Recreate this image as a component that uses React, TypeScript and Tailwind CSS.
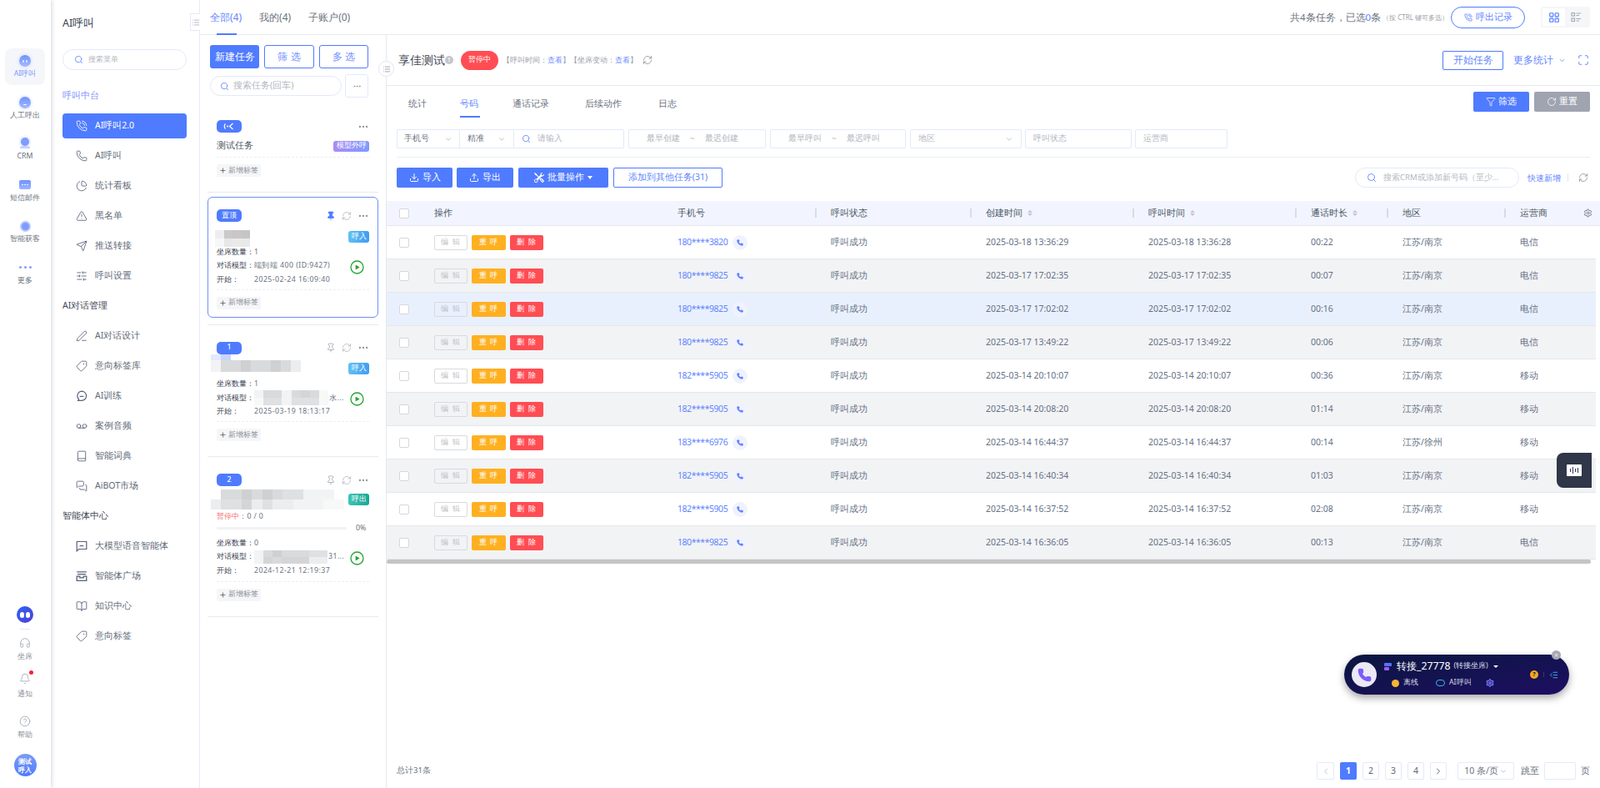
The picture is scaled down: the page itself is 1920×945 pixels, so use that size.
import React from 'react';
import {
  Search, PhoneCall, Phone, ChartPie, TriangleAlert, Send, SlidersHorizontal, PenLine, Tag,
  Voicemail, Book, MessagesSquare, BookOpen, Headphones, Bell, CircleHelp, Ellipsis, Plus,
  Pin, RefreshCw, ChevronDown, ChevronLeft, ChevronRight, Funnel, Download, Upload, Settings,
  Maximize, LayoutGrid, ListIndentDecrease, List, RotateCw,
} from 'lucide-react';
import { BsTools } from 'react-icons/bs';

const TagTurned = (p: any) => <Tag {...p} className={`${p.className} rotate-90`} />;
const ChatDash = ({ size, className }: any) => (
  <svg width={size} height={size} viewBox="0 0 14 14" fill="none" stroke="currentColor" strokeWidth="1.2" className={className}>
    <path d="M7 1.2a5.6 5.6 0 0 1 0 11.2H2.6l1-1.6A5.6 5.6 0 0 1 7 1.2z" /><path d="M4.6 7.4h4.8" />
  </svg>
);
const BoxSmile = ({ size, className }: any) => (
  <svg width={size} height={size} viewBox="0 0 14 14" fill="none" stroke="currentColor" strokeWidth="1.2" className={className}>
    <path d="M1.2 1.5h11.6v9H3.6L1.2 12.8z" /><path d="M4.6 6.6h4.8" />
  </svg>
);
const Tray = ({ size, className }: any) => (
  <svg width={size} height={size} viewBox="0 0 14 14" fill="none" stroke="currentColor" strokeWidth="1.3" className={className}>
    <path d="M1.2 1.8h11.6M2 4.6h10M1.2 7.2h3.6v1.6h4.4V7.2h3.6v5.2H1.2z" />
  </svg>
);

const Gradient = ({ children }: { children?: React.ReactNode }) => (
  <div className="w-[14px] h-[14px] rounded-full bg-gradient-to-b from-[#6f92ff] to-[#a4b9ff] shadow-[0_0_4px_#c7d4ff] flex items-center justify-center gap-[2px]">{children}</div>
);

function RailItem({ label, active, icon }: { label: string; active?: boolean; icon: React.ReactNode }) {
  return (
    <div className={`w-[48px] h-[44px] rounded-lg flex flex-col items-center pt-[8px] ${active ? 'bg-[#f5f6fa]' : ''}`}>
      <div className="h-[14px] flex items-center justify-center">{icon}</div>
      <div className={`mt-[2px] text-[8.75px] leading-[13px] whitespace-nowrap ${active ? 'text-[#7c96ff]' : 'text-[#6b7280]'}`}>{label}</div>
    </div>
  );
}

function Rail() {
  return (
    <aside className="w-[61px] shrink-0 h-full flex flex-col items-center bg-white shadow-[1px_0_5px_rgba(60,70,110,0.22)] z-10 pt-[58px] pb-[14px] pr-px">
      <div className="flex flex-col gap-[5.5px]">
        <RailItem active label="AI呼叫" icon={<Gradient><i className="w-[2px] h-[3px] bg-white rounded-full opacity-70" /><i className="w-[2px] h-[3px] bg-white rounded-full opacity-70" /></Gradient>} />
        <RailItem label="人工呼出" icon={<Gradient><i className="w-[4px] h-[2px] mt-[4px] border-b border-white rounded-full" /></Gradient>} />
        <RailItem label="CRM" icon={<div className="w-[14px] h-[14px] flex flex-col items-center"><i className="w-[10px] h-[10px] rounded-full bg-[#7f9cff] shadow-[0_0_4px_#b9c9ff]" /><i className="w-[12px] h-[3px] bg-[#c4d1ff] rounded-t-full" /></div>} />
        <RailItem label="短信邮件" icon={<div className="w-[14px] h-[11px] rounded-[2px] bg-gradient-to-b from-[#6f92ff] to-[#9db3ff] flex items-center justify-center gap-[1.5px]"><i className="w-[1.5px] h-[1.5px] bg-white rounded-full" /><i className="w-[1.5px] h-[1.5px] bg-white rounded-full" /><i className="w-[1.5px] h-[1.5px] bg-white rounded-full" /></div>} />
        <RailItem label="智能获客" icon={<div className="w-[13px] h-[13px] rounded-full border-[2px] border-[#b7c7ff] bg-[#7f9cff]" />} />
        <RailItem label="更多" icon={<div className="flex gap-[3px]"><i className="w-[3px] h-[3px] rounded-full bg-[#7f9cff]" /><i className="w-[3px] h-[3px] rounded-full bg-[#7f9cff]" /><i className="w-[3px] h-[3px] rounded-full bg-[#7f9cff]" /></div>} />
      </div>
      <div className="mt-auto flex flex-col items-center">
        <div className="w-[20px] h-[20px] rounded-full bg-gradient-to-br from-[#2a62f5] to-[#4a3fd8] flex items-center justify-center gap-[2px]">
          <i className="w-[5px] h-[7px] rounded-full bg-white" /><i className="w-[5px] h-[7px] rounded-full bg-white" />
        </div>
        <div className="w-[12px] h-px bg-[#e4e7f7] mt-[7px]" />
        <Headphones size={14} strokeWidth={1.4} className="text-[#9ca3af] mt-[9px]" />
        <div className="text-[8.75px] leading-[13px] text-[#8a919e] mt-[3px]">坐席</div>
        <div className="relative mt-[13px]">
          <Bell size={14} strokeWidth={1.4} className="text-[#9ca3af]" />
          <i className="absolute -top-[3px] -right-[3px] w-[5px] h-[5px] rounded-full bg-[#f5222d]" />
        </div>
        <div className="text-[8.75px] leading-[13px] text-[#8a919e] mt-[5px]">通知</div>
        <CircleHelp size={14} strokeWidth={1.4} className="text-[#9ca3af] mt-[19px]" />
        <div className="text-[8.75px] leading-[13px] text-[#8a919e] mt-[3px]">帮助</div>
        <div className="w-[27px] h-[27px] mt-[16px] rounded-full bg-gradient-to-b from-[#7d9bf7] to-[#4f7bff] text-white text-[7.5px] leading-[10px] font-bold flex flex-col items-center justify-center">
          <span>测试</span><span>呼入</span>
        </div>
      </div>
    </aside>
  );
}

const MenuHeading = ({ children, blue }: { children: React.ReactNode; blue?: boolean }) => (
  <div className={`h-[36px] flex items-center text-[10.5px] ${blue ? 'text-[#7c94ff]' : 'text-[#3f4653]'}`}>{children}</div>
);

function MenuItem({ icon: Icon, label, active }: { icon: any; label: string; active?: boolean }) {
  return (
    <div className="h-[36px] flex items-center">
      <div className={`w-full h-[30px] rounded-[4px] flex items-center pl-[16px] gap-[9px] text-[10.5px] ${active ? 'bg-[#4f7bff] text-white' : 'text-[#636b79]'}`}>
        <Icon size={14} strokeWidth={1.5} className={active ? 'text-white' : 'text-[#59627a]'} />
        <span>{label}</span>
      </div>
    </div>
  );
}

function Menu() {
  return (
    <aside className="w-[179px] shrink-0 h-full bg-white border-r border-[#e6e9fb] pl-[14px] pr-[15px] relative">
      <div className="absolute right-[-1px] top-[16px] w-[12px] h-[21px] bg-white border border-[#e6e9fb] border-r-0 flex items-center justify-center">
        <List size={10} className="text-[#a9adba]" />
      </div>
      <div className="h-[59px] pt-[19px] text-[12.5px] leading-[18px] text-[#374151]">AI呼叫</div>
      <div className="h-[25px] rounded-full border border-[#e4e9fd] flex items-center pl-[13px] gap-[6px] text-[8.75px] text-[#b4b7bf]">
        <Search size={11} className="text-[#6d8dff]" />
        <span>搜索菜单</span>
      </div>
      <div className="mt-[13px]">
        <MenuHeading blue>呼叫中台</MenuHeading>
        <MenuItem active icon={PhoneCall} label="AI呼叫2.0" />
        <MenuItem icon={Phone} label="AI呼叫" />
        <MenuItem icon={ChartPie} label="统计看板" />
        <MenuItem icon={TriangleAlert} label="黑名单" />
        <MenuItem icon={Send} label="推送转接" />
        <MenuItem icon={SlidersHorizontal} label="呼叫设置" />
        <MenuHeading>AI对话管理</MenuHeading>
        <MenuItem icon={PenLine} label="AI对话设计" />
        <MenuItem icon={TagTurned} label="意向标签库" />
        <MenuItem icon={ChatDash} label="AI训练" />
        <MenuItem icon={Voicemail} label="案例音频" />
        <MenuItem icon={Book} label="智能词典" />
        <MenuItem icon={MessagesSquare} label="AiBOT市场" />
        <MenuHeading>智能体中心</MenuHeading>
        <MenuItem icon={BoxSmile} label="大模型语音智能体" />
        <MenuItem icon={Tray} label="智能体广场" />
        <MenuItem icon={BookOpen} label="知识中心" />
        <MenuItem icon={TagTurned} label="意向标签" />
      </div>
    </aside>
  );
}

function Mosaic({ rows, className = '' }: { rows: string[][]; className?: string }) {
  return (
    <div className={`flex flex-col blur-[0.6px] ${className}`}>
      {rows.map((r, i) => (
        <div key={i} className="flex flex-1">
          {r.map((c, j) => <div key={j} className="flex-1" style={{ backgroundColor: c }} />)}
        </div>
      ))}
    </div>
  );
}

const AddTag = () => (
  <div className="w-[53px] h-[15px] rounded-[2px] bg-[#f5f6f8] flex items-center justify-center gap-[2px] text-[8.75px] text-[#8c9099]">
    <Plus size={9} className="text-[#555]" /><span>新增标签</span>
  </div>
);

const Dashed = () => <div className="border-t border-dashed border-[#eceef2]" />;

const TopIcons = ({ pinned, only }: { pinned?: boolean; only?: boolean }) => (
  <div className="flex items-center gap-[7px]">
    {!only && <Pin size={12} strokeWidth={1.5} className={pinned ? 'text-[#4f7bff] fill-[#4f7bff]' : 'text-[#9aa0ab]'} />}
    {!only && <RefreshCw size={12} strokeWidth={1.2} className="text-[#9aa0ab]" />}
    <Ellipsis size={14} className="text-[#8d929c]" />
  </div>
);

const CardBadge = ({ children }: { children: React.ReactNode }) => (
  <div className="w-[30px] h-[15px] rounded-[5px] bg-[#4f7bff] text-white text-[8.75px] font-medium flex items-center justify-center">{children}</div>
);

const Kind = ({ children, className }: { children: React.ReactNode; className: string }) => (
  <div className={`w-[25px] h-[14px] rounded-[3px] text-white text-[8.75px] flex items-center justify-center ${className}`}>{children}</div>
);

const PlayIcon = () => (
  <svg width="17" height="17" viewBox="0 0 17 17" className="mr-[6px] mt-[3px] shrink-0">
    <circle cx="8.5" cy="8.5" r="7.5" fill="none" stroke="#22a52e" strokeWidth="1.3" />
    <path d="M6.6 5.4 L11.6 8.5 L6.6 11.6 Z" fill="#22a52e" />
  </svg>
);

function Info({ rows }: { rows: [string, React.ReactNode][] }) {
  return (
    <div className="flex items-center">
      <div className="flex-1 min-w-0">
        {rows.map(([k, v], i) => (
          <div key={i} className="h-[16.5px] flex items-center text-[8.75px] whitespace-nowrap">
            <span className="w-[45px] shrink-0 font-medium text-[#374151]">{k}</span>
            <span className="text-[#6b7280] tracking-[0.45px] flex items-center">{v}</span>
          </div>
        ))}
      </div>
      <PlayIcon />
    </div>
  );
}

const Card = ({ selected, children }: { selected?: boolean; children: React.ReactNode }) => (
  <div className="pt-[5px] pb-[8px] border-b border-[#e8eaee]">
    <div className={`rounded-[6px] border px-[10px] pt-[14px] pb-[9px] ${selected ? 'border-[#6d8ff5]' : 'border-transparent'}`}>{children}</div>
  </div>
);

const g = ['#e9ebee', '#d9dadc', '#cfd0d2', '#d6d5d5', '#dfe0e2', '#ecedef', '#f2f3f4', '#f7f8f8'];

function TaskList() {
  return (
    <section className="w-[224px] shrink-0 h-full border-r border-[#e6e8ee] bg-white">
      <div className="px-[12px] pt-[12px]">
        <div className="flex gap-[6px]">
          <div className="w-[59px] h-[28px] rounded-[3px] bg-[#4f7bff] text-white text-[11.75px] flex items-center justify-center">新建任务</div>
          <div className="w-[60px] h-[28px] rounded-[3px] border border-[#4f7bff] text-[#6b8cff] text-[11.75px] flex items-center justify-center">筛 选</div>
          <div className="w-[59px] h-[28px] rounded-[3px] border border-[#4f7bff] text-[#6b8cff] text-[11.75px] flex items-center justify-center">多 选</div>
        </div>
        <div className="flex items-center gap-[4px] mt-[7px] h-[28px]">
          <div className="w-[158px] h-[24px] rounded-full border border-[#e4e9fd] flex items-center pl-[11px] gap-[5px] text-[10.5px] text-[#b4b7bf]">
            <Search size={11} className="text-[#6d8dff]" /><span>搜索任务(回车)</span>
          </div>
          <div className="w-[28px] h-[28px] rounded-[3px] border border-[#e4e9fd] flex items-center justify-center"><Ellipsis size={11} className="text-[#8d929c]" /></div>
        </div>
      </div>
      <div className="px-[9px] mt-[7px]">
        <Card>
          <div className="flex items-center justify-between h-[15px]">
            <CardBadge>
              <svg width="14" height="9" viewBox="0 0 14 9" fill="none" stroke="#fff" strokeWidth="1.2">
                <path d="M2.5 1.5 C0.8 3.5 0.8 5.5 2.5 7.5" /><circle cx="5" cy="4.5" r="1" fill="#fff" stroke="none" />
                <path d="M11.5 1 L7.5 4.5 L11.5 8" />
              </svg>
            </CardBadge>
            <TopIcons only />
          </div>
          <div className="flex items-center justify-between mt-[8px] h-[16px]">
            <span className="text-[10.5px] text-[#4b5563]">测试任务</span>
            <div className="w-[43px] h-[13px] rounded-[3px] bg-gradient-to-r from-[#a98bf5] to-[#7d9bff] text-white text-[8.75px] flex items-center justify-center">模型外呼</div>
          </div>
          <div className="mt-[5px]"><Dashed /></div>
          <div className="mt-[8px]"><AddTag /></div>
        </Card>
        <Card selected>
          <div className="flex items-center justify-between h-[15px]"><CardBadge>置顶</CardBadge><TopIcons pinned /></div>
          <div className="flex items-start justify-between h-[28px]">
            <Mosaic className="w-[53px] h-[20px] mt-[10px] -ml-[2px]" rows={[['#eceef0', '#c9c9ca', '#c9c6c5', '#c5c5c6', '#fff'], ['#f6f7f8', '#e7e7e8', '#eaeaea', '#e9e9ea', '#fff']]} />
            <Kind className="mt-[11px] bg-gradient-to-r from-[#62c0f0] to-[#3f9cf5]">呼入</Kind>
          </div>
          <Info rows={[['坐席数量：', '1'], ['对话模型：', '端到端 400 (ID:9427)'], ['开始：', '2025-02-24 16:09:40']]} />
          <div className="mt-[3px]"><Dashed /></div>
          <div className="mt-[8px]"><AddTag /></div>
        </Card>
        <Card>
          <div className="flex items-center justify-between h-[15px]"><CardBadge>1</CardBadge><TopIcons /></div>
          <div className="flex items-start justify-between h-[28px]">
            <Mosaic className="w-[108px] h-[21px] -ml-[7px]" rows={[['#e3eafd', '#c7d4fb', '#fff', '#fff', '#fff', '#fff', '#fff', '#fff', '#fff'], [g[6], g[1], g[1], g[2], g[1], g[1], g[2], g[1], g[5]], [g[6], g[1], g[1], g[2], g[1], g[1], g[2], g[1], g[5]]]} />
            <Kind className="mt-[10px] bg-gradient-to-r from-[#62c0f0] to-[#3f9cf5]">呼入</Kind>
          </div>
          <Info rows={[['坐席数量：', '1'], ['对话模型：', <><Mosaic className="w-[89px] h-[18px]" rows={[[g[6], g[1], g[1], g[6], g[1], g[3], g[1], g[7]], [g[7], g[4], g[4], g[6], g[4], g[4], g[4], g[7]]]} /><span className="ml-[1px]">水...</span></>], ['开始：', '2025-03-19 18:13:17']]} />
          <div className="mt-[3px]"><Dashed /></div>
          <div className="mt-[8px]"><AddTag /></div>
        </Card>
        <Card>
          <div className="flex items-center justify-between h-[15px]"><CardBadge>2</CardBadge><TopIcons /></div>
          <div className="flex items-start justify-between h-[29px]">
            <Mosaic className="w-[160px] h-[24px] mt-[4px] -ml-[7px]" rows={[['#fff', g[1], g[1], g[2], g[1], g[2], g[1], g[4], g[4], g[6], g[6], g[6], '#fff'], [g[5], g[4], g[4], g[3], g[5], g[4], g[5], g[5], g[6], g[6], g[6], g[7], g[7]]]} />
            <Kind className="mt-[9px] bg-gradient-to-r from-[#3cc4b4] to-[#16a894]">呼出</Kind>
          </div>
          <div className="flex items-center h-[16px] text-[8.75px]"><span className="text-[#f56c6c]">暂停中</span><span className="text-[#6b7280] tracking-[0.4px]">：0 / 0</span></div>
          <div className="flex items-center h-[11px]">
            <div className="w-[156px] h-[3px] rounded-full bg-[#f1f2f4]" />
            <span className="ml-[11px] text-[8.75px] text-[#6b7280]">0%</span>
          </div>
          <div className="mt-[4px]">
            <Info rows={[['坐席数量：', '0'], ['对话模型：', <><Mosaic className="w-[88px] h-[16px]" rows={[[g[6], g[1], g[2], g[1], g[1], g[1], g[4], g[4]], [g[6], g[3], g[1], g[3], g[3], g[3], g[5], g[5]]]} /><span className="ml-[1px]">31...</span></>], ['开始：', '2024-12-21 12:19:37']]} />
          </div>
          <div className="mt-[4px]"><Dashed /></div>
          <div className="mt-[8px]"><AddTag /></div>
        </Card>
      </div>
    </section>
  );
}

const Field = ({ w, children, cls = '' }: { w: string; children?: React.ReactNode; cls?: string }) => (
  <div className={`${w} h-[23px] shrink-0 border border-[#e4e9fb] flex items-center text-[9.6px] ${cls}`}>{children}</div>
);

const Blue = ({ w, icon: Icon, children }: { w: string; icon: any; children: React.ReactNode }) => (
  <div className={`${w} h-[24px] rounded-[2px] bg-[#4f7bff] text-white text-[10.5px] flex items-center justify-center gap-[4px]`}>
    <Icon size={12} />{children}
  </div>
);

const cols = 'grid grid-cols-[57px_292px_184px_186px_195px_195px_110px_141px_1fr]';

const data = [
  ['180****3820', '2025-03-18 13:36:29', '2025-03-18 13:36:28', '00:22', '江苏/南京', '电信'],
  ['180****9825', '2025-03-17 17:02:35', '2025-03-17 17:02:35', '00:07', '江苏/南京', '电信'],
  ['180****9825', '2025-03-17 17:02:02', '2025-03-17 17:02:02', '00:16', '江苏/南京', '电信'],
  ['180****9825', '2025-03-17 13:49:22', '2025-03-17 13:49:22', '00:06', '江苏/南京', '电信'],
  ['182****5905', '2025-03-14 20:10:07', '2025-03-14 20:10:07', '00:36', '江苏/南京', '移动'],
  ['182****5905', '2025-03-14 20:08:20', '2025-03-14 20:08:20', '01:14', '江苏/南京', '移动'],
  ['183****6976', '2025-03-14 16:44:37', '2025-03-14 16:44:37', '00:14', '江苏/徐州', '移动'],
  ['182****5905', '2025-03-14 16:40:34', '2025-03-14 16:40:34', '01:03', '江苏/南京', '移动'],
  ['182****5905', '2025-03-14 16:37:52', '2025-03-14 16:37:52', '02:08', '江苏/南京', '移动'],
  ['180****9825', '2025-03-14 16:36:05', '2025-03-14 16:36:05', '00:13', '江苏/南京', '电信'],
];

const Check = () => <div className="w-[12px] h-[12px] bg-white border border-[#d5d7dc] rounded-[2px] ml-[15px]" />;

const SortMark = () => (
  <span className="flex flex-col gap-[1px]">
    <i className="w-0 h-0 border-x-[3px] border-x-transparent border-b-[3.5px] border-b-[#c2c5cc]" />
    <i className="w-0 h-0 border-x-[3px] border-x-transparent border-t-[3.5px] border-t-[#c2c5cc]" />
  </span>
);

const HeadCell = ({ children, sort, handle = true }: { children: React.ReactNode; sort?: boolean; handle?: boolean }) => (
  <div className="relative flex items-center gap-[6px] pr-[18px]">
    <span>{children}</span>
    {sort && <SortMark />}
    {handle && <i className="absolute right-[17px] top-[2px] w-[2px] h-[11px] bg-[#d9dbe0]" />}
  </div>
);

function Table() {
  return (
    <div className="mt-[16px]">
      <div className={`${cols} h-[30px] items-center bg-[#f2f5ff] border-b border-[#e4e6ea] text-[10.5px] text-[#4b5563]`}>
        <Check />
        <HeadCell handle={false}>操作</HeadCell>
        <HeadCell>手机号</HeadCell>
        <HeadCell>呼叫状态</HeadCell>
        <HeadCell sort>创建时间</HeadCell>
        <HeadCell sort>呼叫时间</HeadCell>
        <HeadCell sort>通话时长</HeadCell>
        <HeadCell>地区</HeadCell>
        <div className="flex items-center justify-between pr-[9px]"><span>运营商</span><Settings size={11} className="text-[#6b7280]" /></div>
      </div>
      {data.map((r, i) => (
        <div key={i} className={`${cols} w-[1451px] h-[40px] items-center border-b border-[#e6e7ea] text-[10.5px] text-[#667085] ${i === 2 ? 'bg-[#e9f0fd]' : i % 2 === 1 ? 'bg-[#f2f3f5]' : 'bg-white'}`}>
          <Check />
          <div className="flex gap-[5px]">
            <div className="w-[40px] h-[18px] rounded-[2px] border border-[#d9dadd] text-[#bfc1c6] text-[8.75px] tracking-[1px] flex items-center justify-center bg-transparent">编 辑</div>
            <div className="w-[41px] h-[18px] rounded-[2px] bg-[#ffb021] text-white text-[8.75px] tracking-[1px] flex items-center justify-center">重 呼</div>
            <div className="w-[40px] h-[18px] rounded-[2px] bg-[#ff4d53] text-white text-[8.75px] tracking-[1px] flex items-center justify-center">删 除</div>
          </div>
          <div className="flex items-center">
            <span className="w-[66px] text-[#5f86ff] tracking-[-0.45px]">{r[0]}</span>
            <div className="w-[18px] h-[18px] rounded-full bg-[#f0f3fe] flex items-center justify-center"><Phone size={8} className="text-[#5f7fff]" fill="#5f7fff" /></div>
          </div>
          <div>呼叫成功</div>
          <div>{r[1]}</div>
          <div>{r[2]}</div>
          <div>{r[3]}</div>
          <div>{r[4]}</div>
          <div>{r[5]}</div>
        </div>
      ))}
      <div className="w-[1445px] h-[5px] rounded-full bg-[#c4c4c4]" />
    </div>
  );
}

const PageBtn = ({ children, active, muted, w = 'w-[20px]' }: { children: React.ReactNode; active?: boolean; muted?: boolean; w?: string }) => (
  <div className={`${w} h-[21px] rounded-[2px] flex items-center justify-center text-[10.5px] ${active ? 'bg-[#4f7bff] text-white font-bold' : `border border-[#e4e9fb] ${muted ? 'text-[#c4c7cd]' : 'text-[#5d6574]'}`}`}>{children}</div>
);

const TOOLBAR = 'text-[#b4b7bf] rounded-[2px]';

function Main() {
  return (
    <section className="flex-1 min-w-0 h-full flex flex-col relative bg-white">
      <div className="absolute left-[-10px] top-[31px] w-[19px] h-[19px] rounded-full bg-white border border-[#e4e6ea] flex items-center justify-center z-10">
        <List size={10} className="text-[#8d929c]" />
      </div>
      <div className="h-[61px] shrink-0 border-b border-[#e8eaee] flex items-center pl-[14px] pr-[13px]">
        <span className="text-[13.5px] text-[#3f4653]">享佳测试</span>
        <i className="w-[10px] h-[10px] rounded-full bg-[#c4c6ca] text-white text-[7px] not-italic font-bold flex items-center justify-center">!</i>
        <div className="ml-[9px] w-[45px] h-[23px] rounded-full bg-[#ff4d53] text-white text-[8.75px] flex items-center justify-center">暂停中</div>
        <div className="ml-[5px] text-[8.5px] text-[#9a9ea7] whitespace-nowrap">【呼叫时间：<span className="text-[#6d8dff]">查看</span>】【坐席变动：<span className="text-[#6d8dff]">查看</span>】</div>
        <RefreshCw size={12} strokeWidth={1.3} className="text-[#777] ml-[6px]" />
        <div className="ml-auto w-[73px] h-[23px] rounded-[2px] border border-[#4f7bff] text-[#5f86ff] text-[11.75px] flex items-center justify-center">开始任务</div>
        <div className="ml-[12px] text-[11.75px] text-[#5f86ff] flex items-center gap-[6px]">更多统计<ChevronDown size={9} /></div>
        <Maximize size={14} strokeWidth={1.5} className="ml-[14px] text-[#4f7bff]" />
      </div>
      <div className="h-[38px] shrink-0 flex justify-between pl-[26px] pr-[12px] text-[11.2px] text-[#6b7280]">
        <div className="flex">
          <div className="pt-[13px] w-[62px]">统计</div>
          <div className="pt-[13px] w-[63px]"><div className="w-[24px] h-[25px] border-b-2 border-[#4f7bff] text-[#5f86ff]">号码</div></div>
          <div className="pt-[13px] w-[87px]">通话记录</div>
          <div className="pt-[13px] w-[88px]">后续动作</div>
          <div className="pt-[13px]">日志</div>
        </div>
        <div className="flex gap-[6px] mt-[7px]">
          <div className="w-[67px] h-[24px] rounded-[2px] bg-[#4f7bff] text-white text-[10.5px] flex items-center justify-center gap-[3px]"><Funnel size={12} strokeWidth={1.5} />筛选</div>
          <div className="w-[67px] h-[24px] rounded-[2px] bg-[#a0a4b1] text-white text-[10.5px] flex items-center justify-center gap-[3px]"><RotateCw size={12} strokeWidth={1.5} />重置</div>
        </div>
      </div>
      <div className="mx-[12px] mt-[14px] pb-[10px] border-b border-[#eceef1] flex">
        <Field w="w-[75px]" cls="rounded-l-[2px] justify-between px-[8px] text-[#6b7280] border-r-0"><span>手机号</span><ChevronDown size={10} className="text-[#b4b7bf]" /></Field>
        <Field w="w-[65px]" cls="justify-between px-[9px] text-[#6b7280] border-r-0"><span>精准</span><ChevronDown size={10} className="text-[#b4b7bf]" /></Field>
        <Field w="w-[133px]" cls="rounded-r-[2px] pl-[9px] gap-[8px] text-[#b4b7bf]"><Search size={11} className="text-[#6d8dff]" /><span>请输入</span></Field>
        <Field w="w-[165px]" cls={`ml-[5px] pl-[21px] ${TOOLBAR}`}><span>最早创建</span><span className="ml-[12px]">~</span><span className="ml-[12px]">最迟创建</span></Field>
        <Field w="w-[163px]" cls={`ml-[5px] pl-[21px] ${TOOLBAR}`}><span>最早呼叫</span><span className="ml-[12px]">~</span><span className="ml-[12px]">最迟呼叫</span></Field>
        <Field w="w-[134px]" cls={`ml-[5px] justify-between px-[9px] ${TOOLBAR}`}><span>地区</span><ChevronDown size={10} /></Field>
        <Field w="w-[128px]" cls={`ml-[4px] pl-[9px] ${TOOLBAR}`}>呼叫状态</Field>
        <Field w="w-[111px]" cls={`ml-[4px] pl-[9px] ${TOOLBAR}`}>运营商</Field>
      </div>
      <div className="mx-[12px] mt-[12px] h-[24px] shrink-0 flex items-center">
        <Blue w="w-[67px]" icon={Download}>导入</Blue>
        <div className="w-[5px]" />
        <Blue w="w-[68px]" icon={Upload}>导出</Blue>
        <div className="w-[6px]" />
        <Blue w="w-[108px]" icon={BsTools}>批量操作<span className="w-0 h-0 border-x-[3px] border-x-transparent border-t-[4px] border-t-white" /></Blue>
        <div className="ml-[6px] w-[131px] h-[24px] rounded-[2px] border border-[#4f7bff] text-[#5f86ff] text-[10.5px] flex items-center justify-center">添加到其他任务(31)</div>
        <div className="ml-auto w-[197px] h-[24px] rounded-full border border-[#e4e9fb] flex items-center pl-[13px] gap-[8px] text-[9.6px] text-[#b4b7bf] whitespace-nowrap"><Search size={12} className="text-[#6d8dff]" />搜索CRM或添加新号码（至少...</div>
        <span className="ml-[10px] text-[10px] text-[#5f86ff]">快速新增</span>
        <i className="ml-[8px] w-px h-[10px] bg-[#e4e6ea]" />
        <RefreshCw size={12} strokeWidth={1.3} className="ml-[12px] mr-[2px] text-[#777]" />
      </div>
      <Table />
      <div className="mt-auto h-[21px] mb-[10px] mx-[12px] flex items-center text-[9.6px] text-[#6b7280]">
        <span>总计31条</span>
        <div className="ml-auto flex items-center">
          <div className="flex items-center gap-[7px]">
            <PageBtn muted w="w-[21px]"><ChevronLeft size={12} /></PageBtn>
            <PageBtn active>1</PageBtn>
            <PageBtn>2</PageBtn>
            <PageBtn>3</PageBtn>
            <PageBtn>4</PageBtn>
            <PageBtn><ChevronRight size={12} /></PageBtn>
          </div>
          <div className="ml-[13px] w-[68px] h-[21px] rounded-[2px] border border-[#e4e9fb] flex items-center justify-center gap-[1px] text-[10.5px] text-[#6b7280] whitespace-nowrap">10 条/页<ChevronDown size={10} className="text-[#b4b7bf]" /></div>
          <span className="ml-[8px] text-[10.5px]">跳至</span>
          <div className="ml-[6px] w-[38px] h-[21px] rounded-[2px] border border-[#e4e9fb]" />
          <span className="ml-[6px] text-[10.5px]">页</span>
        </div>
      </div>
      <div className="absolute right-[10px] top-[501px] w-[42px] h-[42px] rounded-l-lg bg-[#2f3748] flex items-center justify-center">
        <div className="w-[18px] h-[14px] bg-white rounded-[1px] flex items-center justify-center gap-[1.5px]">
          <i className="w-[1.5px] h-[4px] bg-[#2f3748]" /><i className="w-[1.5px] h-[8px] bg-[#2f3748]" /><i className="w-[1.5px] h-[4px] bg-[#2f3748]" /><i className="w-[1.5px] h-[6px] bg-[#2f3748]" />
        </div>
      </div>
    </section>
  );
}

function CallWidget() {
  return (
    <div className="absolute left-[1613px] top-[785px] w-[270px] h-[48px] rounded-full bg-gradient-to-br from-[#0a1540] to-[#1d0d62] shadow-[0_4px_10px_rgba(0,0,0,0.35)] flex items-center pl-[9px] text-white z-20">
      <div className="absolute right-[10px] -top-[5px] w-[11px] h-[11px] rounded-full bg-[#a7a9b3] text-[#eee] text-[8px] leading-none flex items-center justify-center">×</div>
      <div className="w-[30px] h-[30px] rounded-full bg-[#ebe9f3] flex items-center justify-center">
        <Phone size={17} className="text-[#7c5cff]" fill="#7c5cff" />
      </div>
      <div className="ml-[9px]">
        <div className="flex items-center h-[18px]">
          <div className="w-[9px] flex flex-col gap-[1px]"><i className="w-[9px] h-[4px] rounded-[1px] bg-[#5b6fff]" /><i className="w-[6px] h-[4px] rounded-[1px] bg-[#9a5cff]" /></div>
          <span className="ml-[6px] text-[12.25px]">转接_27778</span>
          <span className="ml-[4px] text-[8.75px] text-[#d8dae8]">(转接坐席)</span>
          <span className="ml-[6px] w-0 h-0 border-x-[3px] border-x-transparent border-t-[3px] border-t-white" />
        </div>
        <div className="flex items-center h-[18px] mt-[2px] pl-[9px] text-[8.75px] text-[#d8dae8]">
          <i className="w-[9px] h-[9px] rounded-full bg-[#f7b733]" />
          <span className="ml-[5px]">离线</span>
          <i className="ml-[21px] w-[11px] h-[8px] rounded-full border-[1.5px] border-[#38b6f0]" />
          <span className="ml-[5px]">AI呼叫</span>
          <Settings size={10} strokeWidth={3} className="ml-[17px] text-[#7a7cff]" />
        </div>
      </div>
      <div className="ml-auto mr-[13px] flex items-center">
        <i className="w-[10px] h-[10px] rounded-full bg-[#f5a623] text-[#222] text-[7px] font-bold not-italic flex items-center justify-center">?</i>
        <i className="w-px h-[6px] bg-[#3a3a6a] mx-[6px]" />
        <ListIndentDecrease size={11} className="text-[#38b6f0]" />
      </div>
    </div>
  );
}

export default function App() {
  return (
    <div className="relative w-[1920px] h-[945px] overflow-hidden flex bg-white font-['Noto_Sans','Noto_Sans_CJK_SC',sans-serif]">
      <Rail />
      <Menu />
      <div className="flex-1 min-w-0 h-full flex flex-col">
        <div className="h-[42px] shrink-0 flex items-center border-b border-[#e8eaee] pl-[12px] pr-[12px] relative">
          <div className="flex text-[12px] text-[#6b7280] gap-[21px]">
            <span className="text-[#5f86ff]">全部(4)</span>
            <span>我的(4)</span>
            <span>子账户(0)</span>
          </div>
          <i className="absolute left-[20px] bottom-[-1px] w-[24px] h-[2px] bg-[#4f7bff]" />
          <div className="ml-auto flex items-center">
            <span className="text-[11.5px] text-[#6b7280]">共4条任务，已选<span className="text-[#5f86ff]">0</span>条</span>
            <span className="ml-[2px] text-[8px] text-[#9a9ea7]">（按 CTRL 键可多选）</span>
            <div className="ml-[3px] w-[89px] h-[26px] rounded-full border border-[#4f7bff] text-[#5f86ff] text-[10.5px] flex items-center justify-center gap-[4px]"><PhoneCall size={10} />呼出记录</div>
            <div className="ml-[19px] w-[59px] h-[25px] rounded-[3px] bg-[#f5f6f8] flex items-center">
              <div className="w-[27px] h-[21px] ml-[2px] bg-white rounded-[2px] flex items-center justify-center"><LayoutGrid size={14} strokeWidth={2} className="text-[#4f7bff]" /></div>
              <svg width="13" height="13" viewBox="0 0 13 13" className="ml-[7px]" fill="none" stroke="#a3a8b3" strokeWidth="1.1">
                <rect x="1" y="1.5" width="3.5" height="3.5" /><rect x="1" y="8" width="3.5" height="3.5" />
                <path d="M6.5 2 H12 M6.5 4.5 H10 M6.5 8.5 H12 M6.5 11 H10" />
              </svg>
            </div>
          </div>
        </div>
        <div className="flex-1 min-h-0 flex">
          <TaskList />
          <Main />
        </div>
      </div>
      <CallWidget />
    </div>
  );
}
